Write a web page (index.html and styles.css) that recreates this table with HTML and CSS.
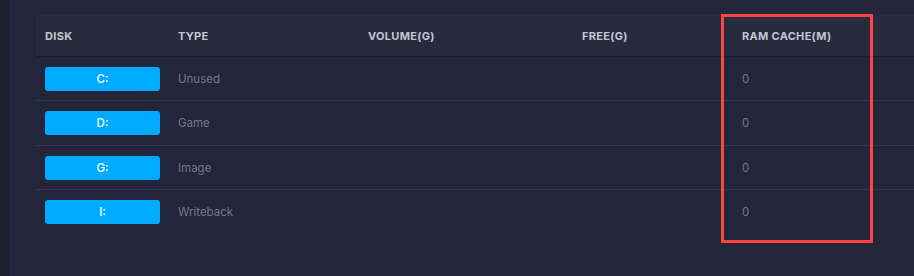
FILE: index.html
```html
<!DOCTYPE html>
<html>
<head>
<meta charset="utf-8">
<link rel="stylesheet" href="styles.css">
</head>
<body>
<div class="app">
  <div class="sidebar"></div>
  <main class="content">
    <div class="table">
      <div class="row head">
        <div class="c c1">DISK</div>
        <div class="c c2">TYPE</div>
        <div class="c c3">VOLUME(G)</div>
        <div class="c c4">FREE(G)</div>
        <div class="c c5">RAM CACHE(M)</div>
      </div>
      <div class="row">
        <div class="c c1"><span class="disk">C:</span></div>
        <div class="c c2">Unused</div>
        <div class="c c3"></div>
        <div class="c c4"></div>
        <div class="c c5">0</div>
      </div>
      <div class="row r2">
        <div class="c c1"><span class="disk">D:</span></div>
        <div class="c c2">Game</div>
        <div class="c c3"></div>
        <div class="c c4"></div>
        <div class="c c5">0</div>
      </div>
      <div class="row">
        <div class="c c1"><span class="disk">G:</span></div>
        <div class="c c2">Image</div>
        <div class="c c3"></div>
        <div class="c c4"></div>
        <div class="c c5">0</div>
      </div>
      <div class="row last">
        <div class="c c1"><span class="disk">I:</span></div>
        <div class="c c2">Writeback</div>
        <div class="c c3"></div>
        <div class="c c4"></div>
        <div class="c c5">0</div>
      </div>
    </div>
    <div class="highlight"></div>
  </main>
</div>
</body>
</html>
```

FILE: styles.css
```css
* { box-sizing: border-box; }
html, body { margin: 0; padding: 0; }
body {
  width: 914px;
  height: 276px;
  overflow: hidden;
  background: #23253a;
  font-family: Inter, "Open Sans", sans-serif;
}
.app {
  display: flex;
  height: 276px;
}
.sidebar {
  width: 9px;
  background: #1e1f2f;
  flex: none;
}
.content {
  position: relative;
  flex: 1;
  padding: 15px 0 0 27px;
  background: #23253a;
}
.table {
  display: flex;
  flex-direction: column;
}
.row {
  display: grid;
  grid-template-columns: 132px 190px 214px 160px 1fr;
  height: 44px;
  align-items: center;
  border-bottom: 1px solid #33344f;
}
.row.r2 { height: 45px; }
.row.head {
  height: 42px;
  background: #282a3e;
  border-bottom: 1px solid #1c1d2c;
}
.row.last { border-bottom: none; }
.c {
  padding-left: 10px;
  font-size: 11.5px;
  color: #75778a;
}
.head .c {
  font-size: 11px;
  font-weight: 700;
  color: #c4c5d0;
  letter-spacing: 0.3px;
}
.c1 { padding-left: 9px; }
.disk {
  display: flex;
  align-items: center;
  justify-content: center;
  width: 115px;
  height: 24px;
  border-radius: 3px;
  background: #00aaff;
  color: #ffffff;
  font-size: 11.5px;
  font-weight: 500;
}
.highlight {
  position: absolute;
  left: 712px;
  top: 14px;
  width: 152px;
  height: 229px;
  border: 3px solid #ff4343;
}
```
